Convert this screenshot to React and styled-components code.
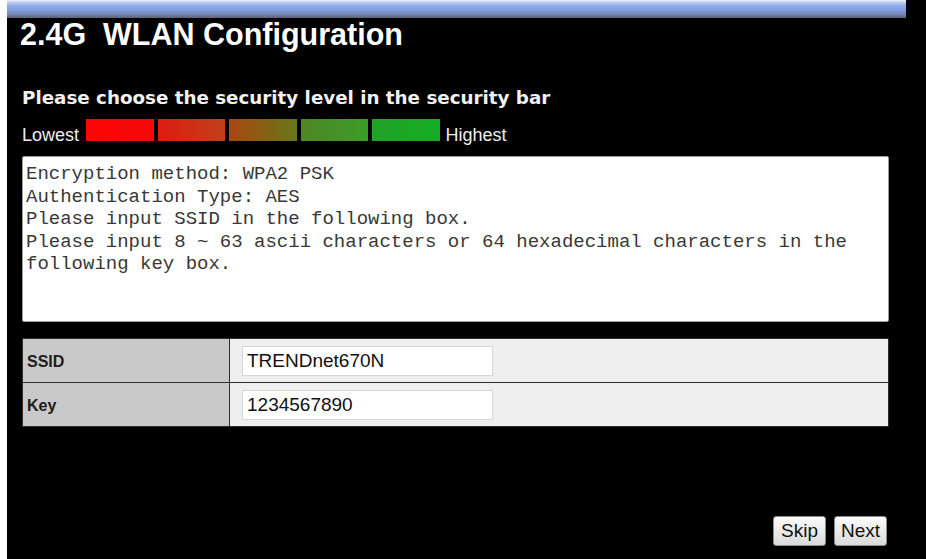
import React from "react";
import styled, { createGlobalStyle } from "styled-components";

const GlobalStyle = createGlobalStyle`
  html, body {
    margin: 0;
    padding: 0;
    background: #fff;
  }
  body {
    font-family: "Liberation Sans", Arial, sans-serif;
  }
`;

const Page = styled.div`
  margin-left: 7px;
  height: 559px;
  background: #000;
  display: flex;
  flex-direction: column;
  overflow: hidden;
`;

const TopBar = styled.div`
  height: 18px;
  margin-right: 20px;
  background: linear-gradient(
    to bottom,
    #f2f4fb 0%,
    #b9cbf2 14%,
    #8eaaea 35%,
    #7f98da 60%,
    #7383b4 80%,
    #5d6274 100%
  );
`;

const Content = styled.div`
  display: flex;
  flex-direction: column;
  padding: 0 37px 0 15px;
`;

const Title = styled.h1`
  margin: 0 0 0 -2px;
  font: bold 30.5px/32px "Liberation Sans", Arial, sans-serif;
  color: #fff;
  white-space: pre;
`;

const Subtitle = styled.h2`
  margin: 37px 0 0;
  font: bold 18.3px/21px "DejaVu Sans", Verdana, sans-serif;
  color: #f2f2f2;
`;

const LevelRow = styled.div`
  margin-top: 11px;
  display: flex;
  align-items: baseline;
  gap: 4px;
`;

const LevelLabel = styled.span`
  font: 18px/18px "Liberation Sans", Arial, sans-serif;
  color: #eee;
  margin: ${(p) => (p.$end ? "0 0 0 2px" : "0 3px 0 0")};
`;

const LevelSegment = styled.div`
  width: 67.5px;
  height: 22px;
  background: ${(p) => p.$fill};
`;

const InfoBox = styled.div`
  margin-top: 12px;
  height: 166px;
  box-sizing: border-box;
  padding: 6px 3px 5px;
  background: #fff;
  border: 1px solid #9c9c9c;
  border-radius: 2px;
  font: 19px/22.5px "Courier New", "Nimbus Mono PS", "FreeMono", "Liberation Mono", monospace;
  color: #383838;
`;

const InfoLine = styled.div``;

const FormTable = styled.table`
  margin-top: 16px;
  width: 100%;
  border-collapse: collapse;
`;

const LabelCell = styled.th`
  width: 198px;
  height: 40px;
  padding: 3px 4px 0;
  background: #c9c9c9;
  border: 1px solid #2c2c2c;
  text-align: left;
  font: bold 16px "Liberation Sans", Arial, sans-serif;
  color: #1c1c1c;
`;

const ValueCell = styled.td`
  height: 43px;
  padding: 0 12px;
  background: #efefef;
  border: 1px solid #2c2c2c;
`;

const TextField = styled.input`
  display: block;
  width: 251px;
  height: 30px;
  box-sizing: border-box;
  padding: 0 4px;
  border: 1px solid #d6d6d6;
  background: #fff;
  font: 19px "Liberation Sans", Arial, sans-serif;
  color: #111;
  outline: none;
`;

const Footer = styled.div`
  margin-top: 89px;
  display: flex;
  justify-content: flex-end;
  gap: 8px;
  padding-right: 2px;
`;

const Button = styled.button`
  width: 53px;
  height: 30px;
  padding: 0;
  border: 1px solid #8c8c8c;
  border-radius: 3px;
  background: linear-gradient(to bottom, #fbfbfb, #dadada);
  font: 19px "Liberation Sans", Arial, sans-serif;
  color: #111;
`;

const segments = [
  "linear-gradient(to right, #ff0505, #f40a0a)",
  "linear-gradient(to right, #dc1c10, #c2401a)",
  "linear-gradient(to right, #aa4612, #66781c)",
  "linear-gradient(to right, #4f8624, #3c9c28)",
  "linear-gradient(to right, #22a226, #14ac24)",
];

const infoLines = [
  "Encryption method: WPA2 PSK",
  "Authentication Type: AES",
  "Please input SSID in the following box.",
  "Please input 8 ~ 63 ascii characters or 64 hexadecimal characters in the following key box.",
];

const fields = [
  { label: "SSID", value: "TRENDnet670N" },
  { label: "Key", value: "1234567890" },
];

export default function App() {
  return (
    <>
      <GlobalStyle />
      <Page>
        <TopBar />
        <Content>
          <Title>2.4G  WLAN Configuration</Title>
          <Subtitle>Please choose the security level in the security bar</Subtitle>
          <LevelRow>
            <LevelLabel>Lowest</LevelLabel>
            {segments.map((fill, i) => (
              <LevelSegment key={i} $fill={fill} />
            ))}
            <LevelLabel $end>Highest</LevelLabel>
          </LevelRow>
          <InfoBox>
            {infoLines.map((line) => (
              <InfoLine key={line}>{line}</InfoLine>
            ))}
          </InfoBox>
          <FormTable>
            <tbody>
              {fields.map((f) => (
                <tr key={f.label}>
                  <LabelCell>{f.label}</LabelCell>
                  <ValueCell>
                    <TextField defaultValue={f.value} />
                  </ValueCell>
                </tr>
              ))}
            </tbody>
          </FormTable>
          <Footer>
            <Button>Skip</Button>
            <Button>Next</Button>
          </Footer>
        </Content>
      </Page>
    </>
  );
}
